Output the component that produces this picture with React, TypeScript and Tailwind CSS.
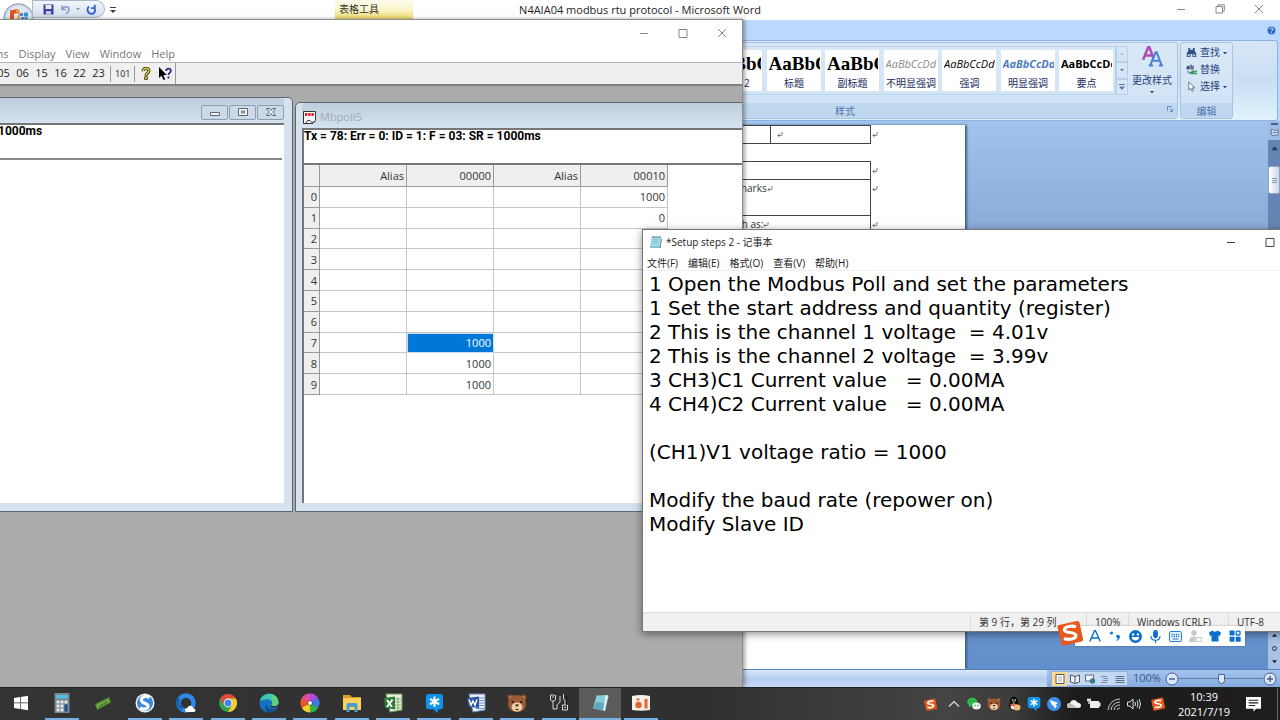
import type { ReactNode } from "react";

const NOTES = `1 Open the Modbus Poll and set the parameters
1 Set the start address and quantity (register)
2 This is the channel 1 voltage  = 4.01v
2 This is the channel 2 voltage  = 3.99v
3 CH3)C1 Current value   = 0.00MA
4 CH4)C2 Current value   = 0.00MA

(CH1)V1 voltage ratio = 1000

Modify the baud rate (repower on)
Modify Slave ID`;

type GlyphProps = { className?: string };

function MinimizeGlyph() {
  return (
    <svg viewBox="0 0 10 10" className="size-[10px]" fill="none" stroke="currentColor">
      <path d="M1 5.5h8" />
    </svg>
  );
}

function MaximizeGlyph() {
  return (
    <svg viewBox="0 0 10 10" className="size-[10px]" fill="none" stroke="currentColor">
      <path d="M1 1.5h8v8H1z" />
    </svg>
  );
}

function RestoreGlyph() {
  return (
    <svg viewBox="0 0 10 10" className="size-[10px]" fill="none" stroke="currentColor">
      <path d="M1 2.500h6.500v6.500H1zM3 2.500V.8h6.300v6.200H7.500" />
    </svg>
  );
}

function CloseGlyph() {
  return (
    <svg viewBox="0 0 10 10" className="size-[10px]" fill="none" stroke="currentColor">
      <path d="M1 1l8 8M9 1l-8 8" />
    </svg>
  );
}

function WindowControls({ restore = false }: { restore?: boolean }) {
  const cell = "flex w-[39px] items-center justify-center";
  return (
    <div className="flex shrink-0 self-stretch">
      <button type="button" aria-label="Minimize" className={cell}>
        <MinimizeGlyph />
      </button>
      <button type="button" aria-label="Maximize" className={cell}>
        {restore ? <RestoreGlyph /> : <MaximizeGlyph />}
      </button>
      <button type="button" aria-label="Close" className={cell}>
        <CloseGlyph />
      </button>
    </div>
  );
}

function Caret({ className = "size-[5px]" }: GlyphProps) {
  return (
    <svg viewBox="0 0 6 6" className={className} fill="currentColor">
      <path d="M0 1.500h6L3 5z" />
    </svg>
  );
}

function SogouIcon({ className }: GlyphProps) {
  return (
    <svg viewBox="0 0 26 26" className={className}>
      <path d="M2 5 20 1q2-.3 2.500 1.500L26 19q.3 2-1.500 2.500L7 25.500q-2 .3-2.600-1.600L.5 7Q.2 5.400 2 5Z" fill="#e8581c" />
      <path
        d="M19 6.800C14.500 5.300 7.600 6.600 7.400 9.900c-.2 3.600 11.700 1.600 11.600 5.500-.1 3.500-7 5-12 3.200"
        fill="none"
        stroke="#fff"
        strokeWidth="3.200"
      />
    </svg>
  );
}

function BearIcon({ className }: GlyphProps) {
  return (
    <svg viewBox="0 0 20 20" className={className}>
      <circle cx="3.500" cy="4.500" r="3" fill="#8a4b2a" />
      <circle cx="16.500" cy="4.500" r="3" fill="#8a4b2a" />
      <circle cx="3.500" cy="4.500" r="1.500" fill="#c98a5c" />
      <circle cx="16.500" cy="4.500" r="1.500" fill="#c98a5c" />
      <path d="M10 2c6 0 9 4 9 9s-4 8-9 8-9-3-9-8 3-9 9-9Z" fill="#9c5a34" />
      <ellipse cx="10" cy="14" rx="5.500" ry="4.500" fill="#efcfa5" />
      <path d="M8 11.500h4L10 14z" fill="#2a1710" />
      <path d="M8.500 16.500h3" stroke="#2a1710" />
      <circle cx="5.800" cy="9" r="1.100" fill="#1d120c" />
      <circle cx="14.200" cy="9" r="1.100" fill="#1d120c" />
    </svg>
  );
}

function StarChatIcon({ className }: GlyphProps) {
  return (
    <svg viewBox="0 0 20 20" className={className}>
      <path d="M4 0h12q3 0 3 3v10q0 3-3 3h-2l-1 4-4-4H4q-3 0-3-3V3q0-3 3-3Z" fill="#0f93ee" />
      <path d="M10 2.500v11M5.200 5.200l9.600 5.600M14.800 5.200l-9.600 5.600" stroke="#fff" strokeWidth="2.200" />
    </svg>
  );
}

/* ---------- Word ---------- */

function OfficeButton() {
  return (
    <button type="button" aria-label="Office" className="mt-[3px] ml-[3px] size-[31px] shrink-0 self-start">
      <svg viewBox="0 0 31 31" className="size-[31px]">
        <circle cx="15.500" cy="15.500" r="14.800" fill="#cbd8e8" stroke="#8795a9" />
        <circle cx="15.500" cy="15.500" r="12.500" fill="#dfe7f0" />
        <path d="M7 7.500l8-1.500v4l-4 .7v5.500l4 .3v2l-8-1z" fill="#d9541e" />
        <path d="M13 6.500l4 1v8l-3 1v-2.500l1-.5V9l-2 .3z" fill="#f0a04a" />
        <path d="M17 10h3v3h-3zM21 9.500h4v4h-4zM18 14h3v3h-3zM21.500 14h3v3h-3z" fill="#3c8fd1" />
      </svg>
    </button>
  );
}

function WordTitleBar() {
  return (
    <div className="relative flex h-5 shrink-0 items-center justify-between bg-white">
      <div className="flex h-5 items-center">
        <OfficeButton />
        <div className="-ml-[2px] flex h-[18px] w-[73px] items-center gap-[6px] self-start rounded-r-full border border-[#a9b7c9] bg-gradient-to-b from-[#f3f7fc] to-[#d3deec] pl-[10px]">
          <button type="button" aria-label="保存">
            <svg viewBox="0 0 11 11" className="size-[11px]">
              <path d="M.5.5h10v10H.5z" fill="#3c3fa6" />
              <path d="M2.500 1h6v4h-6z" fill="#e7effa" />
              <path d="M3 7h5v3.500H3z" fill="#bfc8e6" />
            </svg>
          </button>
          <button type="button" aria-label="撤消" className="flex items-center gap-[5px] text-[#8494ae]">
            <svg viewBox="0 0 11 11" className="size-[11px]" fill="none" stroke="#7f9ccd" strokeWidth="1.600">
              <path d="M2 1.500v4h4M2 5c2-3 7-3 7 .5 0 2-1.500 3.500-3 4.500" />
            </svg>
            <Caret className="size-[4px]" />
          </button>
          <button type="button" aria-label="恢复">
            <svg viewBox="0 0 11 11" className="size-[11px]" fill="none" stroke="#2c62c8" strokeWidth="1.800">
              <path d="M3 2.500C0 5 2 9.800 5.500 9.800S10 6 8 3.500M8.800.8v3.400H5.200" />
            </svg>
          </button>
        </div>
        <button type="button" aria-label="自定义快速访问工具栏" className="ml-[5px] text-[#333c55]">
          <svg viewBox="0 0 6 8" className="h-[8px] w-[6px]" fill="currentColor">
            <path d="M0 1h6v1H0zM0 4h6L3 7z" />
          </svg>
        </button>
      </div>
      <span className="absolute top-0 left-[335px] h-[19px] w-[78px] bg-gradient-to-b from-[#fdfcf0] via-[#fbf6c9] to-[#ecd966] pl-1 text-[10px] leading-[19px] text-[#333]">
        表格工具
      </span>
      <h1 className="absolute inset-x-0 top-0 mx-auto w-max text-[11px] leading-5 text-[#222]">
        N4AIA04 modbus rtu protocol - Microsoft Word
      </h1>
      <div className="mr-[2px] flex h-[18px] self-start text-[#888]">
        <WindowControls restore />
      </div>
    </div>
  );
}

const STYLES = [
  { name: "标题 2", sample: "AaBbC", look: "font-['Liberation_Serif',serif] text-[19px] font-bold text-black" },
  { name: "标题", sample: "AaBbC", look: "font-['Liberation_Serif',serif] text-[19px] font-bold text-black" },
  { name: "副标题", sample: "AaBbC", look: "font-['Liberation_Serif',serif] text-[19px] font-bold text-black" },
  { name: "不明显强调", sample: "AaBbCcDd", look: "text-[11px] italic text-[#8a8a8a]" },
  { name: "强调", sample: "AaBbCcDd", look: "text-[11px] italic text-black" },
  { name: "明显强调", sample: "AaBbCcDd", look: "text-[11px] italic font-bold text-[#4a7ebb]" },
  { name: "要点", sample: "AaBbCcDd", look: "text-[11px] font-bold text-black" },
];

function FindIcon() {
  return (
    <svg viewBox="0 0 12 12" className="size-[11px]" fill="#2f4f86">
      <path d="M2.500 1h2v2h3V1h2v3l1.700 3v4H7V7.500H5V11H.8V7l1.700-3z" />
      <path d="M2 8h2v2H2zM8 8h2v2H8z" fill="#c9dcf3" />
    </svg>
  );
}

function ReplaceIcon() {
  return (
    <svg viewBox="0 0 12 12" className="size-[11px]" fill="none" strokeWidth="1.200">
      <path d="M1 2.500h2.500V5H1.200V3.800h2M5.500.5V5h2.300V2.500H5.500" stroke="#3b4d6e" />
      <path d="M2 7c0 2 1 3 3 3M5 8.500v2.500" stroke="#6a86b0" />
      <path d="M6 7.800h2.200v2.700H6V9h2M12 7.800H9.800v2.700H12" stroke="#2f9a4c" />
    </svg>
  );
}

function PointerIcon() {
  return (
    <svg viewBox="0 0 12 12" className="size-[11px]" fill="#fff" stroke="#5a6f92">
      <path d="M3 1v9l2.200-2 1.500 3.300 1.500-.7L6.700 7.500h3z" />
    </svg>
  );
}

function Ribbon() {
  const group = "flex shrink-0 flex-col rounded-[3px] border border-[#a6c3e3] bg-gradient-to-b from-[#d9e8f6] to-[#cfe2f5]";
  const groupLabel = "relative h-[15px] shrink-0 bg-[#c0d8ef] text-center text-[10px] leading-[16px] text-[#4c72ac]";
  const galleryStep = "flex flex-1 items-center justify-center border border-[#b5cfe9] bg-[#d6e6f6] text-[#5877a6]";
  const editItem = "flex h-[17px] items-center gap-[3px]";
  return (
    <div className="shrink-0 bg-[#bbd9fe]">
      <div className="flex h-5 items-center justify-end pr-1">
        <button type="button" aria-label="帮助">
          <svg viewBox="0 0 10 10" className="size-[9px]">
            <circle cx="5" cy="5" r="4.600" fill="#2565c9" stroke="#9dbdec" />
            <path d="M3.500 3.800c0-2 3.200-1.800 3.200 0C6.700 5 5 4.900 5 6.200M5 7v1" fill="none" stroke="#fff" />
          </svg>
        </button>
      </div>
      <div className="mr-[2px] flex h-[81px] justify-end gap-[2px] overflow-hidden rounded-r-[3px] border-y border-r border-[#8db2e3] bg-gradient-to-b from-[#d7e6f6] via-[#c9def3] to-[#dff2fd] pt-px pr-[44px] pb-px text-[#1f3f7d]">
        <section className={`${group} w-[666px]`} aria-label="样式">
          <div className="flex flex-1 items-start justify-end pt-[3px] pr-1">
            <div className="flex h-[49px] border border-[#bad3ec] pt-[3px] pr-[2px]">
              <div className="flex w-[405px] justify-between">
                {STYLES.map((style) => (
                  <button
                    key={style.name}
                    type="button"
                    className="flex h-[41px] w-[54px] flex-col overflow-hidden bg-white pr-px pl-[2px] text-[#17295f]"
                  >
                    <span className={`h-[27px] w-full overflow-hidden text-left leading-[28px] ${style.look}`}>
                      {style.sample}
                    </span>
                    <span className="w-full text-center text-[10px] leading-[13px] whitespace-nowrap">{style.name}</span>
                  </button>
                ))}
              </div>
            </div>
            <div className="flex h-[49px] w-[12px] flex-col">
              <button type="button" aria-label="上一行" className={galleryStep}>
                <Caret className="size-[4px] rotate-180 text-[#aab4c2]" />
              </button>
              <button type="button" aria-label="下一行" className={galleryStep}>
                <Caret className="size-[4px]" />
              </button>
              <button type="button" aria-label="其他" className={galleryStep}>
                <svg viewBox="0 0 6 6" className="size-[6px]" fill="currentColor">
                  <path d="M0 0h6v1H0zM0 2.500h6L3 6z" />
                </svg>
              </button>
            </div>
            <button type="button" className="ml-[3px] flex w-[42px] flex-col items-center text-[10px] leading-[14px] whitespace-nowrap">
              <svg viewBox="0 0 20 20" className="size-[21px]" fill="none">
                <path d="M1 13 6 1h1l4 11M3 9h6" stroke="#b04ab8" strokeWidth="2.400" />
                <path d="M8 18 13 6h1l4.500 12M6.500 18.500h4M16 18.500h4M10.500 14h6" stroke="#4c84d0" strokeWidth="2" />
              </svg>
              <span className="mt-[6px]">更改样式</span>
              <Caret className="mt-[3px] size-[4px]" />
            </button>
          </div>
          <div className={groupLabel}>
            样式
            <svg viewBox="0 0 6 6" className="absolute top-[3px] right-1 size-[6px]" fill="none" stroke="#6b8cbc">
              <path d="M.5 5V.5H5M2.500 2.500l3 3M5.500 3v2.500H3" />
            </svg>
          </div>
        </section>
        <section className={`${group} w-[53px]`} aria-label="编辑">
          <div className="flex flex-1 flex-col pt-px pl-[5px] text-[10px]">
            <button type="button" className={editItem}>
              <FindIcon />
              查找
              <Caret className="size-[4px]" />
            </button>
            <button type="button" className={editItem}>
              <ReplaceIcon />
              替换
            </button>
            <button type="button" className={editItem}>
              <PointerIcon />
              选择
              <Caret className="size-[4px]" />
            </button>
          </div>
          <div className={groupLabel}>编辑</div>
        </section>
      </div>
    </div>
  );
}

function ParagraphMark() {
  return (
    <svg viewBox="0 0 6 6" className="inline-block size-[6px]" fill="none" stroke="#555" strokeWidth=".8">
      <path d="M5 0v2.500q0 1-1 1H.8M2.500 2 .8 3.500 2.500 5" />
    </svg>
  );
}

function DocumentRow({ height, children }: { height: string; children?: ReactNode }) {
  return (
    <tr className={height}>
      <td className="border border-[#444]" />
      <td className="w-[149px] border border-[#444] pl-[4px] align-top leading-[17px]">{children}</td>
      <td className="w-[8px] pl-px align-top leading-[17px]">
        <ParagraphMark />
      </td>
    </tr>
  );
}

function DocumentArea() {
  return (
    <div className="flex min-h-0 flex-1 bg-gradient-to-b from-[#a2c3ec] via-[#8aabd6] via-20% to-[#628fcb]">
      <div className="flex min-w-0 flex-1 justify-center pt-[4px]">
        <div className="w-[661px] bg-white pr-[86px] pl-[90px] text-[10px] text-[#333] shadow-[2px_0_2px_#41608c]">
          <table className="w-full border-collapse">
            <tbody>
              <tr className="h-[18px]">
                <td className="border border-[#444]" />
                <td className="w-[100px] border border-[#444] pl-[6px]">
                  <ParagraphMark />
                </td>
                <td className="w-[8px] pl-px">
                  <ParagraphMark />
                </td>
              </tr>
            </tbody>
          </table>
          <table className="mt-[17px] w-full border-collapse">
            <tbody>
              <DocumentRow height="h-[18px]" />
              <DocumentRow height="h-[36px]">
                Remarks
                <ParagraphMark />
              </DocumentRow>
              <DocumentRow height="h-[36px]">
                such as:
                <ParagraphMark />
              </DocumentRow>
            </tbody>
          </table>
        </div>
      </div>
      <div className="flex w-[12px] shrink-0 flex-col items-center bg-[#9dbce4]">
        <div className="mt-[2px] h-[2px] w-[7px] bg-[#47608a]" />
        <svg viewBox="0 0 10 10" className="my-[3px] size-[9px]" fill="#dce6f3" stroke="#51688e">
          <path d="M1 2h3l1 1 4-1v6H2z" />
          <path d="M3 5h5" />
        </svg>
        <div className="flex w-full flex-1 flex-col items-center bg-[#6485b3] pt-[5px]">
          <Caret className="size-[7px] rotate-180 text-[#27426e]" />
          <div className="mt-[14px] flex h-[28px] w-full flex-col items-center justify-center gap-px rounded-[2px] border border-[#91a6c4] bg-gradient-to-r from-white to-[#ccd8e8]">
            <span className="h-px w-[5px] bg-[#8696ae]" />
            <span className="h-px w-[5px] bg-[#8696ae]" />
            <span className="h-px w-[5px] bg-[#8696ae]" />
          </div>
        </div>
        <div className="flex w-full flex-col items-center gap-[8px] bg-[#a7c2e6] py-[5px] text-[#222]">
          <Caret className="size-[5px] rotate-180" />
          <span className="size-[5px] rounded-full border border-[#333]" />
          <Caret />
        </div>
      </div>
    </div>
  );
}

function WordStatusBar() {
  return (
    <div className="flex h-[18px] shrink-0 items-center justify-end border-t border-[#567fb8] bg-gradient-to-b from-[#d9e8fb] via-[#b5cff0] to-[#c5daf6]">
      <div className="flex h-full items-center bg-gradient-to-b from-[#a5c4ee] to-[#84abe0] pl-1 text-[#43577d]">
        <div className="flex h-[15px] items-center border border-[#8fb0dd] bg-[#c3d8f3]">
          <button type="button" aria-label="页面视图" className="flex h-[14px] w-[15px] items-center justify-center bg-[#fbdc8f]">
            <svg viewBox="0 0 10 10" className="size-[10px]" fill="#fff" stroke="#51575f">
              <path d="M1 .5h8v9H1z" />
              <path d="M3 3h4M3 5h4M3 7h4" stroke="#aaa" />
            </svg>
          </button>
          <button type="button" aria-label="阅读版式" className="flex w-[15px] justify-center">
            <svg viewBox="0 0 10 10" className="size-[10px]" fill="#eef3fa" stroke="#556">
              <path d="M.5 1 5 2.500 9.500 1v7L5 9.500.5 8zM5 2.500v7" />
            </svg>
          </button>
          <button type="button" aria-label="Web 版式" className="flex w-[15px] justify-center">
            <svg viewBox="0 0 10 10" className="size-[10px]" fill="#eef3fa" stroke="#667">
              <path d="M.5 1h8v6h-8z" />
              <circle cx="7.500" cy="7" r="2.200" fill="#3b8d72" stroke="#27608a" />
            </svg>
          </button>
          <button type="button" aria-label="大纲视图" className="flex w-[15px] justify-center">
            <svg viewBox="0 0 10 10" className="size-[10px]" fill="none" stroke="#7e8da6">
              <path d="M1 2.500h6M3 4.500h5M3 6.500h5M1 8.500h6" />
            </svg>
          </button>
          <button type="button" aria-label="草稿" className="flex w-[15px] justify-center">
            <svg viewBox="0 0 10 10" className="size-[10px]" fill="none" stroke="#5f6e88">
              <path d="M.5 2.500h9M.5 4.500h9M.5 6.500h9M.5 8.500h9" />
            </svg>
          </button>
        </div>
        <span className="ml-[5px] w-[32px] text-[11px] text-[#37568f]">100%</span>
        <button type="button" aria-label="缩小">
          <svg viewBox="0 0 14 14" className="size-[14px]" fill="#d8e6f8" stroke="#49628e">
            <circle cx="7" cy="7" r="6" />
            <path d="M4 7h6" strokeWidth="1.500" />
          </svg>
        </button>
        <input
          type="range"
          aria-label="显示比例"
          defaultValue={50}
          className="h-[14px] w-[84px] appearance-none bg-[linear-gradient(#5f7dab,#5f7dab)] bg-[length:100%_1px] bg-center bg-no-repeat [&::-webkit-slider-thumb]:h-[10px] [&::-webkit-slider-thumb]:w-[7px] [&::-webkit-slider-thumb]:appearance-none [&::-webkit-slider-thumb]:rounded-b-full [&::-webkit-slider-thumb]:border [&::-webkit-slider-thumb]:border-[#49628e] [&::-webkit-slider-thumb]:bg-[#dce8f8]"
        />
        <button type="button" aria-label="放大" className="mr-[3px]">
          <svg viewBox="0 0 14 14" className="size-[14px]" fill="#d8e6f8" stroke="#49628e">
            <circle cx="7" cy="7" r="6" />
            <path d="M4 7h6M7 4v6" strokeWidth="1.500" />
          </svg>
        </button>
      </div>
    </div>
  );
}

/* ---------- Modbus Poll ---------- */

function HelpToolIcon() {
  return (
    <svg viewBox="0 0 10 14" className="h-[13px] w-[10px]" fill="none">
      <path d="M2 4.500C1.500.5 8.500.5 8 4.500 7.800 6.500 5 6.500 5 9.500" stroke="#222" strokeWidth="3.400" />
      <path d="M2 4.500C1.500.5 8.500.5 8 4.500 7.800 6.500 5 6.500 5 9.200" stroke="#d8d024" strokeWidth="1.700" />
      <path d="M3.500 10.500h3v3h-3z" fill="#d8d024" stroke="#222" strokeWidth=".8" />
    </svg>
  );
}

function ContextHelpIcon() {
  return (
    <svg viewBox="0 0 14 14" className="size-[14px]" fill="none">
      <path d="M1 0v11l2.500-2.300L5.500 13l1.700-.8L5.300 8h3.500z" fill="#000" />
      <path d="M8.200 4C8 .8 13 .8 12.800 4c-.1 1.700-2.300 1.800-2.300 4M10.500 9.500v2" stroke="#28288c" strokeWidth="1.800" />
    </svg>
  );
}

function PollGrid() {
  const first: Record<number, string> = { 7: "1000", 8: "1000", 9: "1000" };
  const second: Record<number, string> = { 0: "1000", 1: "0" };
  const head = "w-[87px] border-r border-b border-[#999] bg-[#efefef] pt-px pr-[2px] text-right font-normal";
  const cell = "border-r border-b border-[#c6c6c6] pt-px pr-[2px] text-right";
  return (
    <table className="h-[230px] w-[363px] table-fixed border-separate border-spacing-0 text-[11px] leading-4 text-[#333]">
      <thead>
        <tr className="h-[22px]">
          <th className="w-[16px] border-r border-b border-[#999] bg-[#efefef]" />
          <th className={head}>Alias</th>
          <th className={head}>00000</th>
          <th className={head}>Alias</th>
          <th className={head}>00010</th>
        </tr>
      </thead>
      <tbody>
        {Array.from({ length: 10 }, (_, row) => (
          <tr key={row}>
            <th className="border-r border-b border-[#999] bg-[#efefef] pt-px pr-[2px] text-right font-normal">{row}</th>
            <td className={cell} />
            <td className={row === 7 ? `${cell} bg-[#0078d7] text-white outline outline-[#c9def3] -outline-offset-1` : cell}>
              {first[row]}
            </td>
            <td className={cell} />
            <td className={cell}>{second[row]}</td>
          </tr>
        ))}
      </tbody>
    </table>
  );
}

function PollWindows() {
  const frame = "absolute flex flex-col rounded-t-[5px] border border-[#5e6670] bg-[#d6e3ee]";
  const childButton = "flex h-[15px] w-[27px] items-center justify-center rounded-[2px] border border-[#8b9db2] bg-[#ccd9e6]";
  const title = "flex h-[25px] shrink-0 items-center rounded-t-[4px] bg-gradient-to-b from-[#becddd] to-[#d6e4f1]";
  const status = "h-[33px] text-[12px] leading-3 font-bold text-black font-['Roboto',sans-serif]";
  return (
    <>
      <section aria-label="Mbpoll4" className={`${frame} top-[11px] -left-2 h-[415px] w-[301px] pr-[8px] pb-[8px]`}>
        <div className={`${title} justify-end gap-px pt-[3px]`}>
          <button type="button" aria-label="Minimize" className={childButton}>
            <svg viewBox="0 0 10 4" className="mt-[3px] h-[4px] w-[10px]" fill="#f5f5f5" stroke="#5d6774">
              <path d="M.5.5h9v3h-9z" />
            </svg>
          </button>
          <button type="button" aria-label="Maximize" className={childButton}>
            <svg viewBox="0 0 10 8" className="h-[8px] w-[10px]" fill="#f5f5f5" stroke="#5d6774">
              <path d="M.5.5h9v7h-9zM3.500 3h3v2h-3z" />
            </svg>
          </button>
          <button type="button" aria-label="Close" className={childButton}>
            <svg viewBox="0 0 10 8" className="h-[8px] w-[10px]" fill="#f5f5f5" stroke="#5d6774">
              <path d="M.5.5h3L5 2.500 6.500.5h3L6.800 4l2.700 3.500h-3L5 5.500 3.500 7.500h-3L3.200 4z" />
            </svg>
          </button>
        </div>
        <div className="flex flex-1 flex-col border-t-2 border-[#777] bg-white">
          <p className={`${status} pl-[5px]`}>1000ms</p>
          <div className="mr-[2px] border-t-2 border-[#888]" />
        </div>
      </section>
      <section aria-label="Mbpoll5" className={`${frame} top-[16px] left-[295px] h-[410px] w-[520px] px-[6px] pb-[8px]`}>
        <div className={`${title} gap-1 pt-1 pl-px text-[11px] text-[#a0a9b3]`}>
          <svg viewBox="0 0 13 13" className="size-[13px]">
            <path d="M.5.5h12v9L10 12.500H.5z" fill="#fff" stroke="#333" />
            <path d="M2 3.500h9" stroke="#d8242c" strokeWidth="3" strokeDasharray="2.400 .8" />
            <path d="M3 12q1-4 4-2.500 1 3 5.500.5" fill="none" stroke="#333" />
          </svg>
          Mbpoll5
        </div>
        <div className="flex flex-1 flex-col border-t-2 border-l-2 border-[#777] bg-white">
          <p className={status}>Tx = 78: Err = 0: ID = 1: F = 03: SR = 1000ms</p>
          <div className="border-t-2 border-[#777]">
            <PollGrid />
          </div>
        </div>
      </section>
    </>
  );
}

function ModbusWindow() {
  const tool = "w-[19px] text-center";
  return (
    <section
      aria-label="Modbus Poll"
      className="absolute top-[19px] bottom-0 left-0 flex w-[743px] flex-col border-t border-r border-[#8d8d8d] bg-white shadow-[2px_0_4px_rgba(0,0,0,0.35)]"
    >
      <div className="mr-px flex h-[25px] shrink-0 justify-end text-[#888]">
        <WindowControls />
      </div>
      <nav className="flex h-[17px] w-[175px] shrink-0 justify-end gap-[10px] overflow-hidden text-[11px] leading-4 text-[#777]">
        <button type="button">Functions</button>
        <button type="button">Display</button>
        <button type="button">View</button>
        <button type="button">Window</button>
        <button type="button">Help</button>
      </nav>
      <div className="flex h-[22px] shrink-0 items-center border-t border-[#b5b5b5] bg-[#efefef] text-[11px] text-[#222]">
        <div className="-ml-[6px] flex">
          {["05", "06", "15", "16", "22", "23"].map((code) => (
            <button key={code} type="button" className={tool}>
              {code}
            </button>
          ))}
        </div>
        <div className="ml-[2px] flex h-4 items-center border-x border-[#999] px-[4px] text-[9px]">
          <button type="button">101</button>
        </div>
        <div className="flex h-full items-center gap-[7px] border-r border-[#999] pr-[3px] pl-[6px]">
          <button type="button" aria-label="Help">
            <HelpToolIcon />
          </button>
          <button type="button" aria-label="What's this">
            <ContextHelpIcon />
          </button>
        </div>
      </div>
      <div className="relative flex-1 overflow-hidden border-t-2 border-[#808080] bg-[#ababab]">
        <PollWindows />
      </div>
    </section>
  );
}

/* ---------- Notepad ---------- */

function NotepadWindow() {
  const cell = "border-l border-[#dcdcdc] pl-[8px]";
  return (
    <section
      aria-label="记事本"
      className="absolute top-[229px] left-[642px] flex h-[403px] w-[687px] flex-col border border-[#777] bg-white shadow-[0_2px_8px_rgba(0,0,0,0.45)]"
    >
      <div className="flex h-[24px] shrink-0 items-center gap-1 pl-[6px] text-[#444]">
        <svg viewBox="0 0 14 14" className="size-[13px]">
          <path d="M3 1h10l-1 12H1z" fill="#7fc3d6" />
          <path d="M3.300 2h9l-.7 9H2.300z" fill="#a8dbe8" />
          <path d="M3 1h10M12 13l1.500-10" stroke="#69808a" />
          <path d="M4.500 4h6M4.300 6h6M4 8h6" stroke="#6fb1c6" strokeWidth=".7" />
        </svg>
        <h2 className="flex-1 text-[10px] text-[#222]">*Setup steps 2 - 记事本</h2>
        <WindowControls />
      </div>
      <nav className="flex h-[17px] shrink-0 gap-[10px] border-b border-[#eee] pl-1 text-[10px] leading-[18px] text-[#222]">
        <button type="button">文件(F)</button>
        <button type="button">编辑(E)</button>
        <button type="button">格式(O)</button>
        <button type="button">查看(V)</button>
        <button type="button">帮助(H)</button>
      </nav>
      <textarea
        aria-label="Setup steps 2"
        wrap="off"
        spellCheck={false}
        defaultValue={NOTES}
        className="block min-h-0 w-full flex-1 resize-none overflow-hidden pt-px pl-[6px] text-[20px] leading-6 text-black outline-none font-['Verdana','DejaVu_Sans',sans-serif]"
      />
      <div className="flex h-[19px] shrink-0 justify-end border-t border-[#ddd] bg-[#f0f0f0] text-[10px] leading-[18px] text-[#333]">
        <span className={`${cell} w-[116px]`}>第 9 行，第 29 列</span>
        <span className={`${cell} w-[42px]`}>100%</span>
        <span className={`${cell} w-[100px]`}>Windows (CRLF)</span>
        <span className={`${cell} w-[100px]`}>UTF-8</span>
      </div>
    </section>
  );
}

/* ---------- Sogou input bar ---------- */

function InputBar() {
  const item = "flex w-5 items-center justify-center";
  return (
    <div className="absolute right-[35px] bottom-[41px] flex h-[26px] items-center text-[#0b6fd0]">
      <SogouIcon className="z-10 size-[26px]" />
      <div className="-ml-[8px] flex h-[20px] items-center self-end bg-white pl-[10px] shadow-[0_0_2px_rgba(0,0,0,0.3)]">
        <button type="button" aria-label="中英文" className={item}>
          <svg viewBox="0 0 12 12" className="size-[12px]" fill="none" stroke="currentColor" strokeWidth="1.400">
            <path d="M.8 11.500 5.500.8h1l4.700 10.700M2.500 8h7" />
          </svg>
        </button>
        <button type="button" aria-label="标点" className={item}>
          <svg viewBox="0 0 12 12" className="size-[12px]" fill="currentColor">
            <circle cx="2.500" cy="3" r="1.500" />
            <circle cx="9" cy="6.500" r="1.800" />
            <path d="M10.800 6.500q0 3-3.300 4.500V10q1.500-1 1.800-2.500z" />
          </svg>
        </button>
        <button type="button" aria-label="表情" className={item}>
          <svg viewBox="0 0 12 12" className="size-[13px]">
            <circle cx="6" cy="6" r="6" fill="currentColor" />
            <circle cx="3.800" cy="4.200" r="1.100" fill="#fff" />
            <circle cx="8.200" cy="4.200" r="1.100" fill="#fff" />
            <path d="M2.500 6.500h7q-.5 3.300-3.500 3.300T2.500 6.500Z" fill="#fff" />
          </svg>
        </button>
        <button type="button" aria-label="语音" className={item}>
          <svg viewBox="0 0 12 12" className="size-[13px]" fill="currentColor">
            <rect x="3.800" y="0" width="4.400" height="7.500" rx="2.200" />
            <path d="M1.800 5.500q0 4 4.200 4t4.200-4M6 9.500V12" fill="none" stroke="currentColor" />
          </svg>
        </button>
        <button type="button" aria-label="软键盘" className={item}>
          <svg viewBox="0 0 13 11" className="h-[11px] w-[13px]" fill="none" stroke="currentColor">
            <rect x=".6" y=".6" width="11.800" height="9.800" rx="1" />
            <path d="M2.500 3.500h8M2.500 5.500h8" strokeDasharray="1.200 1" strokeWidth="1.300" />
            <path d="M3.500 8h6" />
          </svg>
        </button>
        <button type="button" aria-label="账号" className={`${item} text-[#c6c8cb]`}>
          <svg viewBox="0 0 13 12" className="h-[12px] w-[13px]" fill="currentColor">
            <circle cx="5" cy="3" r="2.800" />
            <path d="M0 12q0-5.500 5-5.500h1.500V12z" />
            <path d="M7.500 7.500h5v4h-5z" fill="#fff" stroke="currentColor" />
          </svg>
        </button>
        <button type="button" aria-label="皮肤" className={item}>
          <svg viewBox="0 0 12 12" className="size-[12px]" fill="currentColor">
            <path d="M3.500.5Q6 3 8.500.5L12 2.500 11 6 9.500 5.500v6h-7v-6L1 6 0 2.500z" />
          </svg>
        </button>
        <button type="button" aria-label="工具箱" className={item}>
          <svg viewBox="0 0 12 12" className="size-[12px]" fill="currentColor">
            <rect x=".5" y=".5" width="5" height="5" rx=".8" />
            <rect x="7.200" y="1.200" width="3.800" height="3.800" rx=".8" fill="none" stroke="currentColor" strokeWidth="1.300" />
            <rect x=".5" y="6.800" width="5" height="5" rx=".8" />
            <rect x="6.700" y="6.800" width="5" height="5" rx=".8" />
          </svg>
        </button>
      </div>
    </div>
  );
}

/* ---------- Taskbar ---------- */

type TaskbarApp = { name: string; icon: ReactNode; running?: boolean; active?: boolean };

const box = { viewBox: "0 0 20 20", className: "size-[20px]" };

const APPS: TaskbarApp[] = [
  {
    name: "开始",
    icon: (
      <svg {...box} fill="#fff">
        <path d="M3 5l6-1v5.600H3zM9.700 3.900 17 2.700v6.900H9.700zM3 10.300h6V16l-6-1zM9.700 10.300H17v7l-7.300-1.200z" />
      </svg>
    ),
  },
  {
    name: "计算器",
    running: true,
    icon: (
      <svg {...box}>
        <path d="M2.500 0h15v20h-15z" fill="#7a8691" />
        <path d="M4.500 2h11v3.500h-11z" fill="#4fc3e0" />
        <path d="M4.500 7.500h3v3h-3zM8.500 7.500h3v3h-3zM4.500 11.500h3v3h-3zM8.500 11.500h3v3h-3zM4.500 15.500h3v3h-3zM8.500 15.500h3v3h-3zM12.500 7.500h3v3h-3z" fill="#e3e7ea" />
        <path d="M12.500 11.500h3v7h-3z" fill="#1d4f8c" />
      </svg>
    ),
  },
  {
    name: "串口工具",
    icon: (
      <svg {...box}>
        <path d="M2 11 16 4l2 5.500L4 17z" fill="#4f8a2f" />
        <path d="M3.500 12 15.500 6l1 3-12 6.300z" fill="#7fb24a" />
        <path d="M6 13l8-4" stroke="#2c541a" strokeWidth="1.500" strokeDasharray="1.500 1" />
      </svg>
    ),
  },
  {
    name: "搜狗浏览器",
    running: true,
    icon: (
      <svg {...box}>
        <circle cx="10" cy="10" r="9.500" fill="#eef4fb" />
        <circle cx="10" cy="10" r="8" fill="#3e86d8" />
        <path d="M14.500 4.500C9 1.500 4 6 7.500 9c2.500 2 6 1.500 5.500 4.500-.5 2.500-4.500 3.500-8 1.500" fill="none" stroke="#fff" strokeWidth="3.200" />
      </svg>
    ),
  },
  {
    name: "QQ浏览器",
    running: true,
    icon: (
      <svg {...box}>
        <circle cx="10" cy="10" r="7.500" fill="none" stroke="#2b8be8" strokeWidth="4.500" />
        <path d="M3 5a8.500 8.500 0 0 0 3 11" fill="none" stroke="#1660b8" strokeWidth="3" />
        <path d="M10.500 19q-2-.5-1.500-2.500.5-1.500 2-1.300.8-2.700 3.500-2.500 2.500.2 2.800 2.500 2.200.3 2.200 2 0 1.800-2 1.800z" fill="#fff" />
      </svg>
    ),
  },
  {
    name: "Chrome",
    running: true,
    icon: (
      <svg {...box}>
        <circle cx="10" cy="10" r="9" fill="#2fa14f" />
        <path d="M2.200 5.500A9 9 0 0 1 17.800 5.500H10L6.100 12.200z" fill="#e04a3a" />
        <path d="M17.800 5.500A9 9 0 0 1 10 19l3.900-6.800L10 5.500z" fill="#fac62d" />
        <circle cx="10" cy="10" r="4.400" fill="#fff" />
        <circle cx="10" cy="10" r="3.500" fill="#4583ec" />
      </svg>
    ),
  },
  {
    name: "Edge",
    running: true,
    icon: (
      <svg {...box}>
        <circle cx="10" cy="10" r="9.500" fill="#1673c4" />
        <path d="M1 8C3-1.500 18-2 19.500 9c.3 4-4.500 5-7 3.500 2.500-4.500-2-7-5.500-6Q3 6.500 1 8Z" fill="#3cc7a8" />
        <path d="M12 1q7 1.500 7.500 8c.3 4-4.500 5-7 3.500Q14 9 12 1Z" fill="#5fd37a" />
        <path d="M7.500 10c-.5 4 3 7 10 5.500Q14 20 9 19.500 4 17 7.500 10Z" fill="#0f4f94" />
        <path d="M12.500 12.500c2.500 1.500 6 .8 6.800-1.500l-.5 2.800q-5 2.200-8-.3z" fill="#333" />
      </svg>
    ),
  },
  {
    name: "360浏览器",
    running: true,
    icon: (
      <svg {...box} fill="none" strokeWidth="7">
        <path d="M4.500 7.500A6 6 0 0 1 10 4" stroke="#e84a9a" />
        <path d="M10 4a6 6 0 0 1 5.200 3" stroke="#a64fe0" />
        <path d="M15.200 7a6 6 0 0 1 0 6" stroke="#3b7be8" />
        <path d="M15.200 13A6 6 0 0 1 10 16" stroke="#35b04a" />
        <path d="M10 16a6 6 0 0 1-5.200-3" stroke="#f2d02c" />
        <path d="M4.800 13a6 6 0 0 1 0-6" stroke="#f0542c" />
        <circle cx="10" cy="10" r="2" fill="#fff" stroke="none" />
      </svg>
    ),
  },
  {
    name: "文件资源管理器",
    running: true,
    icon: (
      <svg {...box}>
        <path d="M1 2h7l2 2h9v3H1z" fill="#dd9d22" />
        <path d="M1 5h18v12H1z" fill="#fbd25c" />
        <path d="M4.500 19v-7q0-2 2-2h7q2 0 2 2v7h-3v-5h-5v5z" fill="#4a9bd1" />
      </svg>
    ),
  },
  {
    name: "Excel",
    running: true,
    icon: (
      <svg {...box}>
        <path d="M3 1h16v16l-12 2z" fill="#e6f0df" stroke="#6a9a56" />
        <path d="M12 6h6M12 9h6M12 12h6M12 15h6M15 4v13" stroke="#86ae72" />
        <path d="M1 5l11-1.500v13L2 15z" fill="#2f7d32" />
        <path d="M4 7l5 7M9.500 6.500 4 14" stroke="#fff" strokeWidth="2" />
      </svg>
    ),
  },
  { name: "企点", running: true, icon: <StarChatIcon className="size-[19px]" /> },
  {
    name: "Word",
    running: true,
    icon: (
      <svg {...box}>
        <path d="M3 1h16v16l-12 2z" fill="#eaf0fa" stroke="#6888bd" />
        <path d="M13 5h5M13 7.500h5M13 10h5M13 12.500h5M10 15.500h8" stroke="#6d90c8" />
        <path d="M1 5l12-1.500V15L2 13.500z" fill="#2b53a0" />
        <path d="M3 6.500 5 12l2-4 2 4 2-5.500" fill="none" stroke="#fff" strokeWidth="1.500" />
      </svg>
    ),
  },
  { name: "熊", running: true, icon: <BearIcon className="size-[20px]" /> },
  {
    name: "Modbus Poll",
    running: true,
    icon: (
      <svg {...box} fill="none" stroke="#d5d5d5">
        <path d="M1.500 2h5v5l-1.500 1H3L1.500 7zM4 8v8h4v-4l3-3V3M13.500 12h5v5h-5zM16 12V7l-1.500-1V1M3 4h2M15 14.500h2" />
        <path d="M6 2V0M17.500 12V3" stroke="#111" />
      </svg>
    ),
  },
  {
    name: "记事本",
    running: true,
    active: true,
    icon: (
      <svg {...box}>
        <path d="M6.500 2.500 18 2l-3 16-12-2.500z" fill="#8ccbd8" />
        <path d="M15 18 18.500 3l-3-1L13 17z" fill="#d8ecef" />
        <path d="M3 15.500 6 9l8 1-1 7z" fill="#5fa9bd" />
      </svg>
    ),
  },
  {
    name: "录屏",
    running: true,
    icon: (
      <svg {...box}>
        <path d="M1 3q9-2 18 0v14q-9 1.500-18 0z" fill="#f5efe9" />
        <circle cx="7.500" cy="12" r="3.200" fill="#e2672b" />
        <path d="M13.500 6h3v9.500h-3zM5.500 5.500h3v2h-3z" fill="#e2672b" />
      </svg>
    ),
  },
];

const tray = "size-[14px]";

const TRAY: { name: string; icon: ReactNode }[] = [
  {
    name: "显示隐藏的图标",
    icon: (
      <svg viewBox="0 0 14 14" className={tray} fill="none" stroke="#ddd" strokeWidth="1.200">
        <path d="M2 9.500 7 4.500l5 5" />
      </svg>
    ),
  },
  {
    name: "微信",
    icon: (
      <svg viewBox="0 0 14 14" className={tray}>
        <ellipse cx="5.200" cy="5" rx="5" ry="4.200" fill="#2dbf46" />
        <ellipse cx="9.500" cy="9" rx="4.300" ry="3.600" fill="#e9f3ea" />
        <path d="M3.500 4h.1M7 4h.1M8 8.500h.1M11 8.500h.1" stroke="#234" strokeLinecap="round" />
        <path d="M2 8v2.500l2-1.500z" fill="#2dbf46" />
      </svg>
    ),
  },
  { name: "熊", icon: <BearIcon className={tray} /> },
  {
    name: "QQ",
    icon: (
      <svg viewBox="0 0 14 14" className={tray}>
        <path d="M7 0c3 0 4 2.500 4 5l1.500 4-1.500.5q0 3.500-4 3.500t-4-3.500L1.500 9 3 5c0-2.500 1-5 4-5Z" fill="#080808" />
        <ellipse cx="6.500" cy="9.500" rx="2.800" ry="3" fill="#f4f4f4" />
        <path d="M3 6.500q4 2 8 0v1.500q-4 2-8 0z" fill="#d9301c" />
        <ellipse cx="10" cy="10.500" rx="3.500" ry="3" fill="#f0b878" />
        <path d="M5 4.500h3.500L7 6z" fill="#f6a823" />
        <circle cx="5.700" cy="3" r=".8" fill="#fff" />
        <circle cx="8.200" cy="3" r=".8" fill="#fff" />
      </svg>
    ),
  },
  { name: "企点", icon: <StarChatIcon className={tray} /> },
  {
    name: "钉钉",
    icon: (
      <svg viewBox="0 0 14 14" className={tray}>
        <circle cx="7" cy="7" r="7" fill="#3d8df0" />
        <path d="M3 3l8 3-2.500 1.500L10 9l-2.500 3-.3-2.500Q4 8 3 3Z" fill="#fff" />
      </svg>
    ),
  },
  {
    name: "OneDrive",
    icon: (
      <svg viewBox="0 0 14 14" className={tray}>
        <path d="M3 11q-3 0-3-2.500T3 6q1-3 4-3 2.500 0 3.500 2.500Q14 6 14 8.500T11 11z" fill="#f3f3f3" />
        <path d="M3 11q-3 0-3-2.500T3 6l8 5z" fill="#bdbdbd" />
      </svg>
    ),
  },
  {
    name: "电池",
    icon: (
      <svg viewBox="0 0 14 14" className={tray}>
        <path d="M3 4h9v1.500h1.500v4H12V11H3z" fill="#eee" />
        <path d="M0 3h4M1 1.500v3M3 1.500v3M2 4.500V7" stroke="#eee" strokeWidth="1.300" />
      </svg>
    ),
  },
  {
    name: "网络",
    icon: (
      <svg viewBox="0 0 14 14" className={tray} fill="none" stroke="#ccc">
        <path d="M1 13A12 12 0 0 1 13 2M4 13a9 9 0 0 1 9-8M7 13a6 6 0 0 1 6-5M10 13a3 3 0 0 1 3-2" />
      </svg>
    ),
  },
  {
    name: "音量",
    icon: (
      <svg viewBox="0 0 14 14" className={tray} fill="none" stroke="#ddd">
        <path d="M.5 5H3l3-3v10L3 9H.5zM8 5q1 2 0 4M10 3.500q2 3.500 0 7M12 2q3 5 0 10" />
      </svg>
    ),
  },
];

function Taskbar() {
  return (
    <footer className="flex h-[33px] shrink-0 justify-between border-t border-[#222] bg-[linear-gradient(to_right,#343434,#303030_55%,#444_74%,#3c3c3c_79%,#1c1c1c_84%,#1e1e1e)]">
      <nav className="flex w-[662px] shrink-0">
        {APPS.map((app) => (
          <button
            key={app.name}
            type="button"
            aria-label={app.name}
            className={`flex flex-1 flex-col items-center justify-end ${app.active ? "bg-[#5b5b5b]" : ""}`}
          >
            <span className="flex flex-1 items-center">{app.icon}</span>
            <span
              className={`h-[2px] ${app.active ? "w-full" : "w-[34px]"} ${app.running ? "bg-[#76b0e4]" : "bg-transparent"}`}
            />
          </button>
        ))}
      </nav>
      <div className="flex shrink-0 items-center text-white">
        <button type="button" aria-label="搜狗输入法" className="flex w-[28px] justify-center">
          <SogouIcon className="size-[13px]" />
        </button>
        <div className="mr-[2px] flex">
          {TRAY.map((entry) => (
            <button key={entry.name} type="button" aria-label={entry.name} className="flex w-5 justify-center">
              {entry.icon}
            </button>
          ))}
        </div>
        <button type="button" aria-label="中文输入" className="flex w-[24px] justify-center">
          <SogouIcon className="size-[14px]" />
        </button>
        <time dateTime="2021-07-19T10:39" className="w-[68px] text-center text-[11px] leading-[15px]">
          10:39
          <br />
          2021/7/19
        </time>
        <button type="button" aria-label="通知" className="flex w-[30px] justify-center">
          <svg viewBox="0 0 14 14" className="size-[15px]">
            <path d="M0 0h14v11H9.500L7 13.500V11H0z" fill="#fff" />
            <path d="M2.500 3h9M2.500 5.500h9M2.500 8h6" stroke="#222" />
          </svg>
        </button>
        <span className="mr-[2px] ml-[9px] h-full w-px bg-[#666]" />
      </div>
    </footer>
  );
}

export default function App() {
  return (
    <div className="flex h-screen w-full flex-col overflow-hidden bg-[#628fcb] font-['Open_Sans','Noto_Sans_CJK_SC',sans-serif]">
      <main className="relative min-h-0 flex-1 overflow-hidden">
        <div className="flex h-full flex-col">
          <WordTitleBar />
          <Ribbon />
          <DocumentArea />
          <WordStatusBar />
        </div>
        <ModbusWindow />
        <NotepadWindow />
        <InputBar />
      </main>
      <Taskbar />
    </div>
  );
}
